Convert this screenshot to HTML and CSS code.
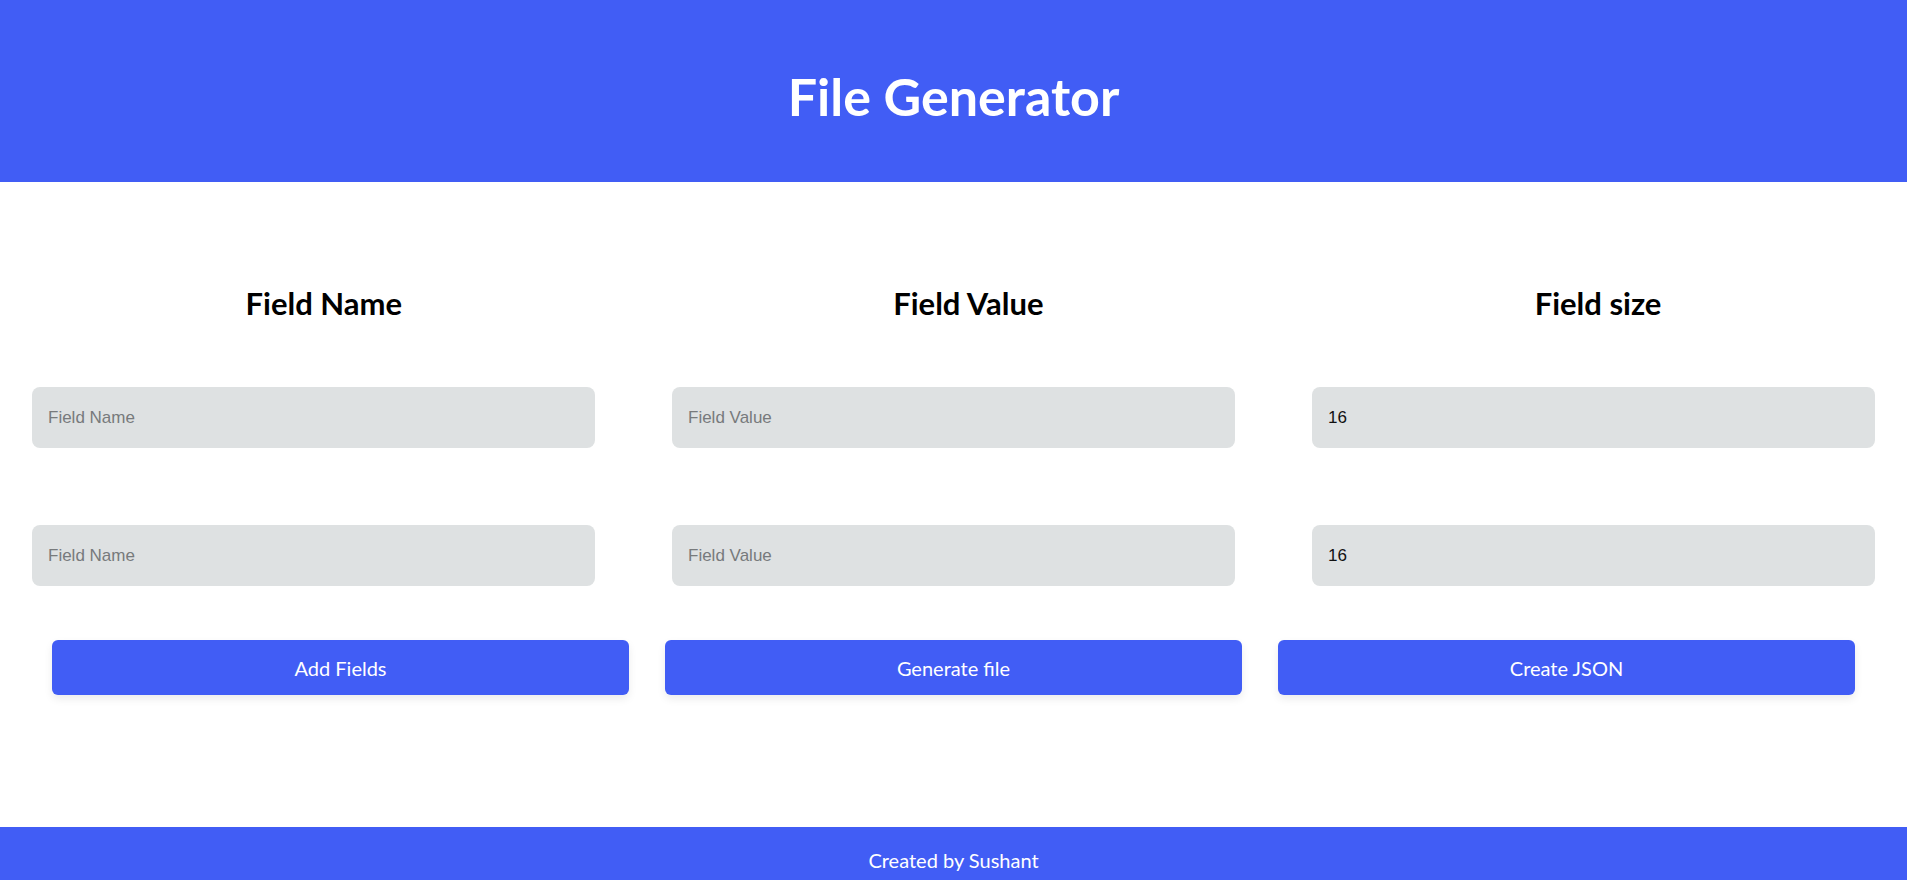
FILE: index.html
```html
<!DOCTYPE html>
<html lang="en">
<head>
<meta charset="utf-8">
<title>File Generator</title>
<link rel="stylesheet" href="styles.css">
</head>
<body>
<header class="header">
  <h1 class="title">File Generator</h1>
</header>
<main class="main">
  <div class="headings">
    <h2 class="heading">Field Name</h2>
    <h2 class="heading">Field Value</h2>
    <h2 class="heading">Field size</h2>
  </div>
  <div class="fields">
    <input class="field" type="text" placeholder="Field Name">
    <input class="field" type="text" placeholder="Field Value">
    <input class="field" type="number" value="16">
    <input class="field" type="text" placeholder="Field Name">
    <input class="field" type="text" placeholder="Field Value">
    <input class="field" type="number" value="16">
  </div>
  <div class="actions">
    <button class="btn" type="button">Add Fields</button>
    <button class="btn" type="button">Generate file</button>
    <button class="btn" type="button">Create JSON</button>
  </div>
</main>
<footer class="footer">Created by Sushant</footer>
</body>
</html>
```
FILE: styles.css
```css
* { box-sizing: border-box; }

html, body {
  margin: 0;
  padding: 0;
}

body {
  min-height: 100vh;
  display: flex;
  flex-direction: column;
  font-family: Lato, "Open Sans", sans-serif;
  background: #ffffff;
  color: #000;
}

.header {
  background: #415df5;
  height: 182px;
  display: flex;
  align-items: center;
  justify-content: center;
  padding-top: 10px;
}

.title {
  margin: 0;
  font-size: 52px;
  font-weight: 700;
  line-height: 1;
  color: #ffffff;
}

.main {
  flex: 1;
  display: flex;
  flex-direction: column;
}

.headings {
  display: flex;
  justify-content: space-around;
  margin-top: 106px;
}

.heading {
  margin: 0;
  font-size: 31px;
  font-weight: 700;
  line-height: 1;
}

.fields {
  display: grid;
  grid-template-columns: repeat(3, 1fr);
  column-gap: 77px;
  row-gap: 77px;
  padding: 0 32px;
  margin-top: 68px;
}

.field {
  height: 61px;
  border: none;
  outline: none;
  border-radius: 8px;
  background: #dee1e2;
  padding: 0 16px;
  font-family: "Liberation Sans", Arial, sans-serif;
  font-size: 17px;
  color: #111;
  -moz-appearance: textfield;
}

.field::placeholder {
  color: #777a7c;
}

.field::-webkit-outer-spin-button,
.field::-webkit-inner-spin-button {
  -webkit-appearance: none;
  margin: 0;
}

.actions {
  display: grid;
  grid-template-columns: repeat(3, 1fr);
  column-gap: 36px;
  padding: 0 52px;
  margin-top: 54px;
}

.btn {
  height: 55px;
  border: none;
  border-radius: 6px;
  background: #415df5;
  color: #ffffff;
  font-family: Lato, "Open Sans", sans-serif;
  font-size: 20px;
  box-shadow: 0 4px 8px rgba(0, 0, 0, 0.08);
  cursor: pointer;
}

.footer {
  background: #415df5;
  color: #ffffff;
  height: 53px;
  padding-top: 23px;
  text-align: center;
  font-size: 20px;
  line-height: 1;
}
```
